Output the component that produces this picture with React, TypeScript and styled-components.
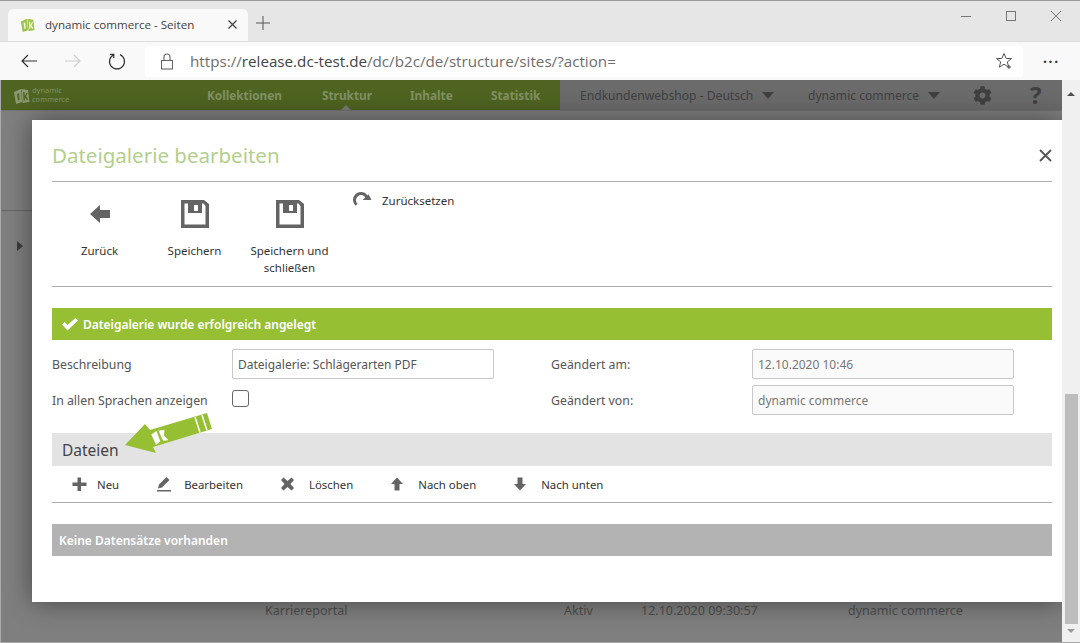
import React from "react";
import styled, { createGlobalStyle } from "styled-components";
import { FaCog } from "react-icons/fa";

const Global = createGlobalStyle`
  html, body { margin: 0; padding: 0; width: 1080px; height: 643px; overflow: hidden; background: #7f7f7f; }
  * { box-sizing: border-box; }
  #root { width: 1080px; height: 643px; }
`;

const FONT = `"Noto Sans", "Open Sans", sans-serif`;
const UI = `"Open Sans", "Noto Sans", sans-serif`;

const Window = styled.div`
  width: 1080px; height: 643px; position: relative; overflow: hidden;
  display: flex; flex-direction: column; font-family: ${FONT};
`;
const TabStrip = styled.div`
  height: 41px; background: #e6e6e6; border-top: 1px solid #9a9a9a; flex: none;
  display: flex; align-items: flex-end; padding-left: 8px;
`;
const Tab = styled.div`
  width: 240px; height: 32px; background: #f9f9f9; border-radius: 5px 5px 0 0;
  display: flex; align-items: center; padding: 0 0 2px 12px;
  font: 11.6px ${UI}; color: #444;
`;
const FavIcon = styled.svg`
  width: 15px; height: 15px; flex: none;
`;
const TabTitle = styled.span`
  margin-left: 10px; flex: 1; white-space: nowrap;
`;
const TabClose = styled.svg`
  width: 9px; height: 9px; margin-right: 11px; stroke: #444; stroke-width: 1.3; fill: none;
`;
const NewTab = styled.svg`
  width: 14px; height: 14px; margin: 0 0 11px 8px; stroke: #555; stroke-width: 1; fill: none;
`;
const WinControls = styled.div`
  margin-left: auto; align-self: flex-start; display: flex; align-items: center;
  height: 30px; padding-right: 19px; gap: 35px;
`;
const WinIcon = styled.svg`
  width: 10px; height: 10px; stroke: #777; stroke-width: 1; fill: none; overflow: visible;
`;
const Toolbar = styled.div`
  height: 39px; background: #f9f9f9; flex: none; display: flex; align-items: center; position: relative;
  border-top: 1px solid #dcdcdc;
`;
const NavIcons = styled.div`
  display: flex; align-items: center; width: 145px; padding-left: 20px; gap: 26px;
`;
const NavIcon = styled.svg<{ $dim?: boolean }>`
  width: 18px; height: 18px; fill: none; stroke: ${(p) => (p.$dim ? "#cfcfcf" : "#333")}; stroke-width: 1.2;
`;
const Address = styled.div`
  width: 878px; height: 31px; background: #fff; border-radius: 4px; display: flex; align-items: center;
  padding: 0 10px 0 16px; font: 15.2px ${UI}; color: #6e6e6e; white-space: nowrap;
`;
const Lock = styled.svg`
  width: 12px; height: 17px; margin-right: 17px; stroke: #666; stroke-width: 1.1; fill: none;
`;
const Host = styled.span`
  color: #444;
`;
const StarIcon = styled.svg`
  width: 18px; height: 18px; margin-left: auto; stroke: #555; stroke-width: 1; fill: none;
`;
const Dots = styled.div`
  margin-left: 20px; font: 700 14px ${UI}; letter-spacing: 1.6px; color: #333; line-height: 1; padding-bottom: 6px;
`;

const Viewport = styled.div`
  flex: 1; display: flex; flex-direction: column; position: relative; background: #7f7f7f; color: #505050;
  border-bottom: 1px solid #a8a8a8; border-left: 1px solid #ababab;
`;
const NavBar = styled.div`
  height: 30px; width: 1061px; display: flex; flex: none; box-shadow: 0 1px 0 #707070;
`;
const NavGreen = styled.div`
  width: 559px; background: #4e6420; display: flex; align-items: center; padding-left: 12px; color: #829264;
  font-weight: 700; font-size: 11.8px; position: relative;
`;
const Brand = styled.div`
  display: flex; align-items: center; gap: 2px; width: 194px; font-size: 7.5px; line-height: 9px; font-weight: 400;
`;
const LogoMark = styled.svg`
  width: 17px; height: 17px; flex: none;
`;
const NavItem = styled.span<{ $w: number }>`
  width: ${(p) => p.$w}px; white-space: nowrap;
`;
const Caret = styled.div`
  position: absolute; left: 340px; bottom: 0; width: 0; height: 0;
  border: 5px solid transparent; border-top: 0; border-bottom-color: #7a7a7a;
`;
const NavGray = styled.div`
  flex: 1; background: #6b6b6b; display: flex; align-items: center; padding-left: 20px; color: #404040; font-size: 12.1px;
`;
const Drop = styled.span<{ $w: number }>`
  width: ${(p) => p.$w}px; display: flex; align-items: center; white-space: nowrap;
`;
const DownTri = styled.i`
  width: 0; height: 0; margin-left: 9px; border: 6px solid transparent; border-bottom: 0; border-top: 7px solid #404040;
`;
const Gear = styled(FaCog)`
  width: 19px; height: 19px; color: #404040; flex: none;
`;
const Help = styled.span`
  margin-left: 38px; font-weight: 700; font-size: 24px; line-height: 1; color: #404040;
`;
const PageLine = styled.div`
  position: absolute; left: 0; top: 130px; width: 32px; height: 1px; background: #666;
`;
const Arrowhead = styled.div`
  position: absolute; left: 16px; top: 161px; width: 0; height: 0;
  border: 5px solid transparent; border-right: 0; border-left: 6px solid #3c3c3c;
`;
const BgRow = styled.div`
  position: absolute; top: 522px; left: -1px; width: 1062px; height: 20px; font-size: 12.5px; color: #4e4e4e;
`;
const BgCell = styled.span<{ $x: number }>`
  position: absolute; left: ${(p) => p.$x}px; white-space: nowrap;
`;

const Scrollbar = styled.div`
  position: absolute; right: 0; top: 0; bottom: 0; width: 18px; background: #f0f0f0;
  display: flex; flex-direction: column; align-items: center;
`;
const ScrollUp = styled.i`
  margin-top: 12px; width: 0; height: 0; border: 4px solid transparent; border-top: 0; border-bottom: 4px solid #505050; flex: none;
`;
const Thumb = styled.div`
  margin-top: 298px; width: 13px; height: 230px; background: #bdbdbd; flex: none;
`;
const ScrollDown = styled.i`
  margin-top: 5px; width: 0; height: 0; border: 4px solid transparent; border-bottom: 0; border-top: 4px solid #9a9a9a; flex: none;
`;

const Modal = styled.div`
  position: absolute; left: 31px; top: 40px; width: 1030px; height: 482px; background: #fff; padding: 0 10px 0 20px;
  box-shadow: 0 0 25px rgba(0, 0, 0, 0.45); color: #333; font-size: 11.5px;
`;
const ModalHead = styled.div`
  height: 62px; border-bottom: 1px solid #adadad; display: flex; align-items: center; justify-content: space-between;
  padding-top: 9px;
`;
const Title = styled.h1`
  margin: 0; font: 400 20.5px ${FONT}; color: #b3cf8e;
`;
const CloseX = styled.svg`
  width: 13px; height: 13px; margin-top: 1px; stroke: #555; stroke-width: 1.8; fill: none;
`;
const ActionBar = styled.div`
  height: 105px; border-bottom: 1px solid #adadad; display: flex; align-items: flex-start;
`;
const BigBtn = styled.div`
  width: 95px; display: flex; flex-direction: column; align-items: center; text-align: center;
  padding-top: 17px; line-height: 17px;
`;
const BigIcon = styled.svg`
  width: 30px; height: 30px; fill: #646464; margin-bottom: 13px; flex: none;
`;
const ResetBtn = styled.div`
  display: flex; align-items: center; margin-left: 15px; padding-top: 9px;
`;
const ResetIcon = styled.svg`
  width: 20px; height: 18px; fill: #646464; margin-right: 10px;
`;
const Banner = styled.div`
  margin-top: 21px; height: 32px; background: #97bf33; color: #fff; font-weight: 600; font-size: 12px;
  display: flex; align-items: center; padding-left: 10px; gap: 5px; letter-spacing: -0.03px;
`;
const Check = styled.svg`
  width: 16px; height: 14px; fill: #fff;
`;
const FormGrid = styled.div`
  display: grid; grid-template-columns: 180px 319px 201px 262px; grid-auto-rows: 36px; margin-top: 6px; align-items: center;
  color: #555; font-size: 12.3px; height: 87px;
`;
const Field = styled.div<{ $ro?: boolean }>`
  height: 30px; width: 262px; border: 1px solid #c8c8c8; border-radius: 2px; padding-left: 5px; display: flex; align-items: center;
  background: ${(p) => (p.$ro ? "#fafafa" : "#fff")}; color: ${(p) => (p.$ro ? "#777" : "#555")}; font-size: 12px;
`;
const Box = styled.div`
  width: 17px; height: 17px; margin-top: -3px; border: 1px solid #666; border-radius: 3px; background: #fff;
`;
const SectionHead = styled.div`
  height: 33px; background: #e3e3e3; padding-left: 10px; display: flex; align-items: center; font-size: 15.5px; color: #444;
`;
const Actions = styled.div`
  height: 37px; border-bottom: 1px solid #adadad; display: flex; align-items: center; padding-left: 20px; gap: 37px;
  font-size: 11.4px; color: #333;
`;
const Action = styled.div`
  display: flex; align-items: center; white-space: nowrap;
`;
const ActionIcon = styled.svg<{ $slot: number }>`
  width: 16px; height: 16px; fill: #646464; margin-right: ${(p) => p.$slot - 16}px; flex: none;
`;
const Empty = styled.div`
  margin-top: 21px; height: 32px; background: #b3b3b3; color: #fff; font-weight: 600; font-size: 12px;
  display: flex; align-items: center; padding-left: 7px;
`;
const Pointer = styled.svg`
  position: absolute; left: 90px; top: 288px; width: 95px; height: 50px;
`;

const Logo = ({ color, cut }: { color: string; cut: string }) => (
  <>
    <path d="M1 5L8 2l1 13-6 2z" fill={color} />
    <path d="M8.500 2L15 3l1.500 12-7 1z" fill={color} />
    <path d="M4 7l2-1 .6 7-1.600.6z M10 5l1.500.2.300 4 1.700-3.500 1.200.4-1.500 3.200 2 3.700-1.500.3-2-3.200.2 3.300-1.300.1z" fill={cut} />
  </>
);

export default function App() {
  return (
    <Window>
      <Global />
      <TabStrip>
        <Tab>
          <FavIcon viewBox="0 0 17 17"><Logo color="#9dc34b" cut="#eef5dc" /></FavIcon>
          <TabTitle>dynamic commerce - Seiten</TabTitle>
          <TabClose viewBox="0 0 9 9"><path d="M.5.5l8 8M8.5.5l-8 8" /></TabClose>
        </Tab>
        <NewTab viewBox="0 0 14 14"><path d="M7 0v14M0 7h14" /></NewTab>
        <WinControls>
          <WinIcon viewBox="0 0 10 10"><path d="M0 5.500h10" /></WinIcon>
          <WinIcon viewBox="0 0 10 10"><rect x=".5" y=".5" width="9" height="9" /></WinIcon>
          <WinIcon viewBox="0 0 10 10"><path d="M0 0l10 10M10 0L0 10" /></WinIcon>
        </WinControls>
      </TabStrip>
      <Toolbar>
        <NavIcons>
          <NavIcon viewBox="0 0 18 18"><path d="M17 9H2M8 3L2 9l6 6" /></NavIcon>
          <NavIcon $dim viewBox="0 0 18 18"><path d="M1 9h15M10 3l6 6-6 6" /></NavIcon>
          <NavIcon viewBox="0 0 18 18"><path d="M6 2.600A7.500 7.500 0 1 0 12 2.600M5.800 6V2.400H2.200" /></NavIcon>
        </NavIcons>
        <Address>
          <Lock viewBox="0 0 12 17"><rect x=".5" y="7.500" width="11" height="8.500" /><path d="M3 7.500V4a3 3 0 0 1 6 0v3.500" /></Lock>
          <span>https://<Host>release.dc-test.de</Host>/dc/b2c/de/structure/sites/?action=</span>
          <StarIcon viewBox="0 0 18 18"><path d="M9 1.500l2.200 5h5.300l-4.200 3.400 1.400 5.300L9 12.200l-4.700 3 1.400-5.300L1.500 6.500h5.300zM14 13v4M12 15h4" /></StarIcon>
        </Address>
        <Dots>...</Dots>
      </Toolbar>
      <Viewport>
        <NavBar>
          <NavGreen>
            <Brand>
              <LogoMark viewBox="0 0 17 17"><Logo color="#8b9a72" cut="#4e6420" /></LogoMark>
              <span>dynamic<br />commerce</span>
            </Brand>
            <NavItem $w={115}>Kollektionen</NavItem>
            <NavItem $w={88}>Struktur</NavItem>
            <NavItem $w={81}>Inhalte</NavItem>
            <NavItem $w={60}>Statistik</NavItem>
            <Caret />
          </NavGreen>
          <NavGray>
            <Drop $w={228}>Endkundenwebshop - Deutsch<DownTri /></Drop>
            <Drop $w={165}>dynamic commerce<DownTri /></Drop>
            <Gear />
            <Help>?</Help>
          </NavGray>
        </NavBar>
        <PageLine />
        <Arrowhead />
        <BgRow>
          <BgCell $x={265}>Karriereportal</BgCell>
          <BgCell $x={564}>Aktiv</BgCell>
          <BgCell $x={641}>12.10.2020 09:30:57</BgCell>
          <BgCell $x={848}>dynamic commerce</BgCell>
        </BgRow>
        <Modal>
          <ModalHead>
            <Title>Dateigalerie bearbeiten</Title>
            <CloseX viewBox="0 0 13 13"><path d="M1 1l11 11M12 1L1 12" /></CloseX>
          </ModalHead>
          <ActionBar>
            <BigBtn>
              <BigIcon viewBox="0 0 30 30"><path d="M5 15l10-9v5h10v8H15v5z" /></BigIcon>
              Zurück
            </BigBtn>
            <BigBtn>
              <BigIcon viewBox="0 0 30 30"><path fillRule="evenodd" d="M1 1h23l5 4v24H1zM4.500 4.500v21h21V7l-2-2.500H22V14H8V4.500zM14 6v6h4V6z" /></BigIcon>
              Speichern
            </BigBtn>
            <BigBtn>
              <BigIcon viewBox="0 0 30 30"><path fillRule="evenodd" d="M1 1h23l5 4v24H1zM4.500 4.500v21h21V7l-2-2.500H22V14H8V4.500zM14 6v6h4V6z" /></BigIcon>
              Speichern und schließen
            </BigBtn>
            <ResetBtn>
              <ResetIcon viewBox="0 0 20 18"><path d="M9 1a8 8 0 0 0-8 8 8 8 0 0 0 2.500 5.800l2-2A5.200 5.200 0 0 1 9 4c2 0 3.500 1 4.400 2.600L10.500 9h9l-3-5.800-1 1.200A8 8 0 0 0 9 1z" /></ResetIcon>
              Zurücksetzen
            </ResetBtn>
          </ActionBar>
          <Banner>
            <Check viewBox="0 0 16 14"><path d="M0 7.500L2.500 5l3 3L13.500 1 16 3.500 5.500 13.500z" /></Check>
            Dateigalerie wurde erfolgreich angelegt
          </Banner>
          <FormGrid>
            <span>Beschreibung</span>
            <Field>Dateigalerie: Schlägerarten PDF</Field>
            <span>Geändert am:</span>
            <Field $ro>12.10.2020 10:46</Field>
            <span>In allen Sprachen anzeigen</span>
            <Box />
            <span>Geändert von:</span>
            <Field $ro>dynamic commerce</Field>
          </FormGrid>
          <SectionHead>Dateien</SectionHead>
          <Actions>
            <Action>
              <ActionIcon $slot={25} viewBox="0 0 16 16"><path d="M5.500 1.500h3.500v5h5.500V10H9v5H5.500v-5H.5V6.500h5z" /></ActionIcon>
              Neu
            </Action>
            <Action>
              <ActionIcon $slot={28} viewBox="0 0 16 16"><path d="M10.500 1l3 3-7.500 7.500-4 1 1-4zM1 14h14v1.500H1z" /></ActionIcon>
              Bearbeiten
            </Action>
            <Action>
              <ActionIcon $slot={29} viewBox="0 0 16 16"><path d="M3.500 1.500L7.500 5l4-3.500 2.500 2.500L10.500 8l3.500 4-2.500 2.500-4-3.500-4 3.500L1 12l3.500-4L1 4z" /></ActionIcon>
              Löschen
            </Action>
            <Action>
              <ActionIcon $slot={28} viewBox="0 0 16 16"><path d="M7 1.500l6 6.500H9.500v6.500h-5V8H1z" /></ActionIcon>
              Nach oben
            </Action>
            <Action>
              <ActionIcon $slot={28} viewBox="0 0 16 16"><path d="M4.500 1.500h5V8H13l-6 6.500L1 8h3.500z" /></ActionIcon>
              Nach unten
            </Action>
          </Actions>
          <Empty>Keine Datensätze vorhanden</Empty>
          <Pointer viewBox="0 0 95 50">
            <path d="M3 37L23 16l5 6 57-17 5 16-59 18 3 6z" fill="#97bf33" />
            <path d="M73 9l5 15.500M80 7l5 15.500" stroke="#fff" strokeWidth="1.500" />
            <g transform="translate(27 22) rotate(-15)"><path d="M1 5L7 3l1 11-5 2zM9 3l6 1-2 5 3 6-5-1-1-4z" fill="#fff" /></g>
          </Pointer>
        </Modal>
        <Scrollbar>
          <ScrollUp />
          <Thumb />
          <ScrollDown />
        </Scrollbar>
      </Viewport>
    </Window>
  );
}
